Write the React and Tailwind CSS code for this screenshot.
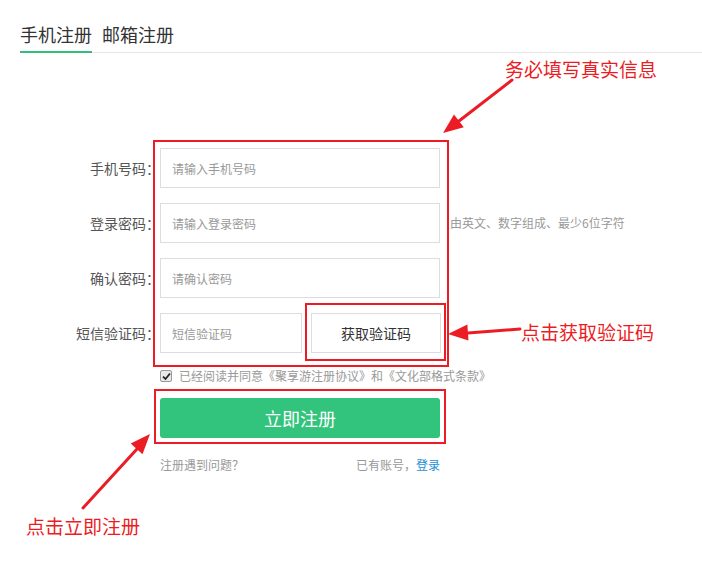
import React from 'react';

const fields = [
  { label: '手机号码：', placeholder: '请输入手机号码' },
  { label: '登录密码：', placeholder: '请输入登录密码', hint: '由英文、数字组成、最少6位字符' },
  { label: '确认密码：', placeholder: '请确认密码' },
];

function Arrows() {
  return (
    <svg className="absolute inset-0 pointer-events-none" width="702" height="561" viewBox="0 0 702 561">
      <g stroke="#ec1c24" strokeWidth="3" strokeLinecap="round">
        <line x1="512" y1="80" x2="459" y2="121" />
        <line x1="520" y1="329" x2="468" y2="333" />
        <line x1="83" y1="508" x2="137" y2="449" />
      </g>
      <g fill="#ec1c24">
        <polygon points="443,133 454,114.5 463.8,127.2" />
        <polygon points="448,334 467.4,324.6 468.5,340.6" />
        <polygon points="150,434 142.5,454.2 130.7,443.4" />
      </g>
    </svg>
  );
}

export default function App() {
  return (
    <div className="relative w-[702px] h-[561px] bg-white overflow-hidden font-['Noto_Sans_CJK_SC',sans-serif] text-[#555]">
      {/* tabs */}
      <div className="ml-[20px] pt-[22px] flex gap-[10px] border-b border-[#e6e6e6]">
        <div className="text-[18px] leading-[24px] pb-[5px] border-b-2 border-[#2fc07a] mb-[-1px] text-[#333]">手机注册</div>
        <div className="text-[18px] leading-[24px] pb-[5px] mb-[-1px] text-[#333]">邮箱注册</div>
      </div>

      {/* form */}
      <div className="pt-[95px] flex flex-col gap-[15px]">
        {fields.map((f) => (
          <div key={f.label} className="flex items-center h-10">
            <label className="w-[160px] text-right text-[14px]">{f.label}</label>
            <input
              type="text"
              placeholder={f.placeholder}
              className="w-[280px] h-10 border border-[#ddd] pl-[11px] text-[12px] placeholder-[#999] outline-none"
            />
            {f.hint && <span className="ml-[10px] text-[12px] text-[#999]">{f.hint}</span>}
          </div>
        ))}
        <div className="flex items-center h-10">
          <label className="w-[160px] text-right text-[14px]">短信验证码：</label>
          <input
            type="text"
            placeholder="短信验证码"
            className="w-[142px] h-10 border border-[#ddd] pl-[11px] text-[12px] placeholder-[#999] outline-none"
          />
          <button className="ml-[9px] w-[130px] h-10 border border-[#ddd] bg-white text-[14px] text-[#333]">获取验证码</button>
        </div>
      </div>

      <div className="ml-[160px] mt-[11px] h-[24px] flex items-center gap-[7px]">
        <span className="w-[12px] h-[12px] border border-[#999] rounded-[2px] bg-[#e8e8e8] flex items-center justify-center">
          <svg width="9" height="9" viewBox="0 0 9 9">
            <path d="M1 4.6 L3.5 7 L8 1.5" fill="none" stroke="#222" strokeWidth="1.8" />
          </svg>
        </span>
        <span className="text-[12px] text-[#999]">已经阅读并同意《聚享游注册协议》和《文化部格式条款》</span>
      </div>

      <button className="ml-[160px] mt-[10px] w-[280px] h-10 rounded-[3px] bg-[#32c47c] text-white text-[18px]">立即注册</button>

      <div className="ml-[160px] mt-[17px] w-[280px] flex justify-between text-[12px] leading-[20px] text-[#999]">
        <span>注册遇到问题？</span>
        <span>已有账号，<span className="text-[#1e8fd6]">登录</span></span>
      </div>

      {/* annotations */}
      <div className="absolute left-[153px] top-[140px] w-[296px] h-[227px] border-2 border-[#ec1c24]" />
      <div className="absolute left-[305px] top-[303px] w-[141px] h-[58px] border-2 border-[#ec1c24]" />
      <div className="absolute left-[154px] top-[389px] w-[292px] h-[55px] border-2 border-[#ec1c24]" />
      <Arrows />
      <div className="absolute left-[505px] top-[59px] text-[19px] leading-[20px] text-[#ec1c24]">务必填写真实信息</div>
      <div className="absolute left-[521px] top-[322px] text-[19px] leading-[20px] text-[#ec1c24]">点击获取验证码</div>
      <div className="absolute left-[26px] top-[516px] text-[19px] leading-[20px] text-[#ec1c24]">点击立即注册</div>
    </div>
  );
}
